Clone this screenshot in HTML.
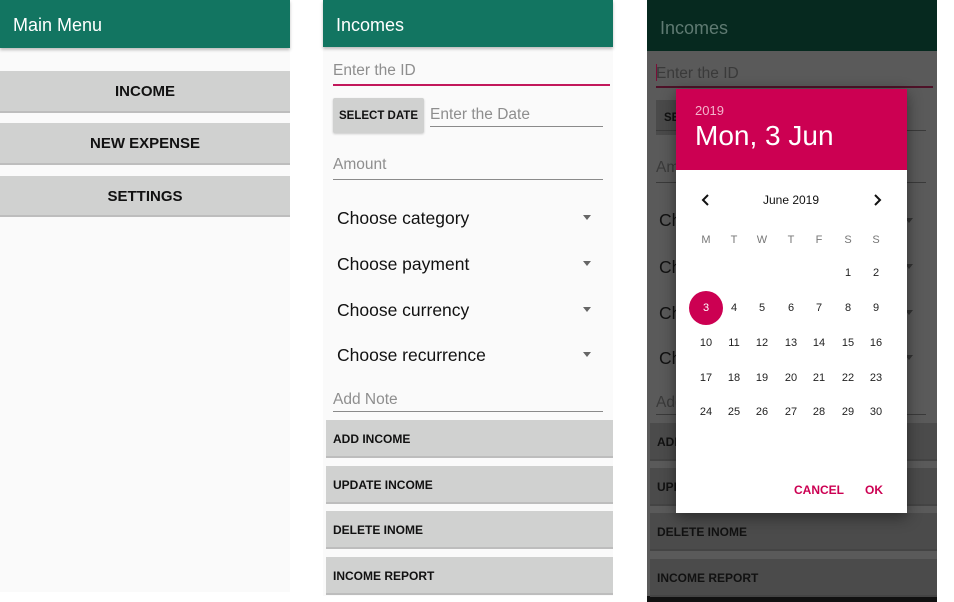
<!DOCTYPE html>
<html><head><meta charset="utf-8"><style>
*{margin:0;padding:0;box-sizing:border-box}
body{width:954px;height:602px;background:#fff;position:relative;overflow:hidden;font-family:"Liberation Sans",sans-serif}
.a{position:absolute;white-space:nowrap}
.hdr{position:absolute;top:0;height:48px;background:#127561;color:#fff;font-size:18px;line-height:50px;padding-left:13px;box-shadow:0 2px 3px rgba(0,0,0,.25)}
.btn{position:absolute;background:#d0d1d0;border-bottom:2px solid #bdbdbd;font-weight:bold;font-size:15px;color:#111}
.sb{font-size:12px;padding-left:7px}
.ph{color:#8e8e8e;font-size:15.5px}
.ul{position:absolute;height:1px;background:#8a8a8a}
.sp{color:#111;font-size:17.5px}
.tri{position:absolute;width:0;height:0;border-left:4.5px solid transparent;border-right:4.5px solid transparent;border-top:5px solid #666}
.d{position:absolute;width:28px;text-align:center;font-size:11px;color:#222;line-height:14px}
</style></head><body>
<!-- panel 1 -->
<div class="a" style="left:0;top:0;width:290px;height:592px;background:#fafafa"></div>
<div class="hdr" style="left:0;width:290px">Main Menu</div>
<div class="btn" style="left:0;top:71px;width:290px;height:42px;line-height:42px;text-align:center">INCOME</div>
<div class="btn" style="left:0;top:123px;width:290px;height:42px;line-height:42px;text-align:center">NEW EXPENSE</div>
<div class="btn" style="left:0;top:176px;width:290px;height:41px;line-height:41px;text-align:center">SETTINGS</div>

<!-- panel 2 -->
<div class="a" style="left:323px;top:0;width:290px;height:596px;background:#fafafa"></div>
<div class="hdr" style="left:323px;width:290px;height:47px;line-height:50px">Incomes</div>
<div class="a ph" style="left:333px;top:62px">Enter the ID</div>
<div class="ul" style="left:333px;top:84px;width:277px;height:2px;background:#c2185b"></div>
<div class="a" style="left:333px;top:98px;width:91px;height:35px;background:#d0d1d0;border-radius:2px;box-shadow:0 1px 2px rgba(0,0,0,.2);font-size:11.5px;font-weight:bold;line-height:37px;text-align:center;color:#111">SELECT DATE</div>
<div class="a ph" style="left:430px;top:106px">Enter the Date</div>
<div class="ul" style="left:430px;top:126px;width:173px"></div>
<div class="a ph" style="left:333px;top:156px">Amount</div>
<div class="ul" style="left:333px;top:179px;width:270px"></div>
<div class="a sp" style="left:337px;top:208px">Choose category</div><div class="tri" style="left:583px;top:215px"></div>
<div class="a sp" style="left:337px;top:254px">Choose payment</div><div class="tri" style="left:583px;top:261px"></div>
<div class="a sp" style="left:337px;top:300px">Choose currency</div><div class="tri" style="left:583px;top:307px"></div>
<div class="a sp" style="left:337px;top:345px">Choose recurrence</div><div class="tri" style="left:583px;top:352px"></div>
<div class="a ph" style="left:333px;top:391px">Add Note</div>
<div class="ul" style="left:333px;top:411px;width:270px"></div>
<div class="btn sb" style="left:326px;top:420px;width:287px;height:38px;line-height:39px">ADD INCOME</div>
<div class="btn sb" style="left:326px;top:466px;width:287px;height:38px;line-height:38px">UPDATE INCOME</div>
<div class="btn sb" style="left:326px;top:511px;width:287px;height:38px;line-height:38px">DELETE INOME</div>
<div class="btn sb" style="left:326px;top:557px;width:287px;height:38px;line-height:38px">INCOME REPORT</div>

<!-- panel 3 -->
<div class="a" style="left:647px;top:0;width:290px;height:602px;background:#5a5a5a"></div>
<div class="a" style="left:647px;top:596px;width:290px;height:6px;background:#111"></div>
<div class="a" style="left:647px;top:0;width:290px;height:51px;background:#06291f;color:#5f7a72;font-size:18px;line-height:56px;padding-left:13px">Incomes</div>
<div class="a" style="left:656px;top:65px;color:#3a3a3a;font-size:15.5px">Enter the ID</div>
<div class="a" style="left:656px;top:64px;width:1px;height:17px;background:#7a0f38"></div>
<div class="ul" style="left:656px;top:86px;width:277px;height:2px;background:#4e1228"></div>
<div class="a" style="left:656px;top:100px;width:24px;height:35px;background:#4a4a4a;color:#111;font-size:11.5px;font-weight:bold;line-height:37px;padding-left:8px">SE</div>
<div class="ul" style="left:656px;top:130px;width:270px;background:#3a3a3a"></div>
<div class="a" style="left:656px;top:159px;color:#3a3a3a;font-size:15.5px">Amount</div>
<div class="ul" style="left:656px;top:182px;width:270px;background:#3a3a3a"></div>
<div class="a" style="left:659px;top:210px;color:#111;font-size:17.5px">Ch</div><div class="tri" style="left:905px;top:218px;border-top-color:#333"></div>
<div class="a" style="left:659px;top:257px;color:#111;font-size:17.5px">Ch</div><div class="tri" style="left:905px;top:264px;border-top-color:#333"></div>
<div class="a" style="left:659px;top:303px;color:#111;font-size:17.5px">Ch</div><div class="tri" style="left:905px;top:310px;border-top-color:#333"></div>
<div class="a" style="left:659px;top:348px;color:#111;font-size:17.5px">Ch</div><div class="tri" style="left:905px;top:355px;border-top-color:#333"></div>
<div class="a" style="left:656px;top:394px;color:#3a3a3a;font-size:15.5px">Add</div>
<div class="ul" style="left:656px;top:414px;width:270px;background:#3a3a3a"></div>
<div class="btn sb" style="left:650px;top:423px;width:287px;height:38px;line-height:39px;background:#4b4b4b;border-bottom-color:#444">ADD</div>
<div class="btn sb" style="left:650px;top:468px;width:287px;height:38px;line-height:39px;background:#4b4b4b;border-bottom-color:#444">UPD</div>
<div class="btn sb" style="left:650px;top:513px;width:287px;height:38px;line-height:39px;background:#4b4b4b;border-bottom-color:#444">DELETE INOME</div>
<div class="btn sb" style="left:650px;top:559px;width:287px;height:38px;line-height:39px;background:#4b4b4b;border-bottom-color:#444">INCOME REPORT</div>

<!-- dialog -->
<div class="a" style="left:676px;top:89px;width:231px;height:424px;background:#fff;box-shadow:0 4px 14px rgba(0,0,0,.45)"></div>
<div class="a" style="left:676px;top:89px;width:231px;height:81px;background:#cc0052"></div>
<div class="a" style="left:695px;top:103px;color:#f3b3cb;font-size:13px">2019</div>
<div class="a" style="left:695px;top:120px;color:#fff;font-size:28px">Mon, 3 Jun</div>
<svg class="a" style="left:700px;top:193px" width="12" height="14"><path d="M8 2 L3 7 L8 12" fill="none" stroke="#111" stroke-width="2"/></svg>
<svg class="a" style="left:871px;top:193px" width="12" height="14"><path d="M4 2 L9 7 L4 12" fill="none" stroke="#111" stroke-width="2"/></svg>
<div class="a" style="left:740px;top:193px;width:102px;text-align:center;font-size:12px;color:#111">June 2019</div>
<div class="a" style="left:689px;top:291px;width:34px;height:34px;border-radius:50%;background:#cc0052"></div>
<div class="d" style="left:692px;top:233px;color:#777">M</div><div class="d" style="left:720px;top:233px;color:#777">T</div><div class="d" style="left:748px;top:233px;color:#777">W</div><div class="d" style="left:777px;top:233px;color:#777">T</div><div class="d" style="left:805px;top:233px;color:#777">F</div><div class="d" style="left:834px;top:233px;color:#777">S</div><div class="d" style="left:862px;top:233px;color:#777">S</div>
<div class="d" style="left:834px;top:266px">1</div><div class="d" style="left:862px;top:266px">2</div>
<div class="d" style="left:692px;top:301px;color:#fff">3</div><div class="d" style="left:720px;top:301px">4</div><div class="d" style="left:748px;top:301px">5</div><div class="d" style="left:777px;top:301px">6</div><div class="d" style="left:805px;top:301px">7</div><div class="d" style="left:834px;top:301px">8</div><div class="d" style="left:862px;top:301px">9</div>
<div class="d" style="left:692px;top:336px">10</div><div class="d" style="left:720px;top:336px">11</div><div class="d" style="left:748px;top:336px">12</div><div class="d" style="left:777px;top:336px">13</div><div class="d" style="left:805px;top:336px">14</div><div class="d" style="left:834px;top:336px">15</div><div class="d" style="left:862px;top:336px">16</div>
<div class="d" style="left:692px;top:371px">17</div><div class="d" style="left:720px;top:371px">18</div><div class="d" style="left:748px;top:371px">19</div><div class="d" style="left:777px;top:371px">20</div><div class="d" style="left:805px;top:371px">21</div><div class="d" style="left:834px;top:371px">22</div><div class="d" style="left:862px;top:371px">23</div>
<div class="d" style="left:692px;top:405px">24</div><div class="d" style="left:720px;top:405px">25</div><div class="d" style="left:748px;top:405px">26</div><div class="d" style="left:777px;top:405px">27</div><div class="d" style="left:805px;top:405px">28</div><div class="d" style="left:834px;top:405px">29</div><div class="d" style="left:862px;top:405px">30</div>
<div class="a" style="left:794px;top:483px;color:#cc0052;font-size:12px;font-weight:bold">CANCEL</div>
<div class="a" style="left:865px;top:483px;color:#cc0052;font-size:12px;font-weight:bold">OK</div>
</body></html>
